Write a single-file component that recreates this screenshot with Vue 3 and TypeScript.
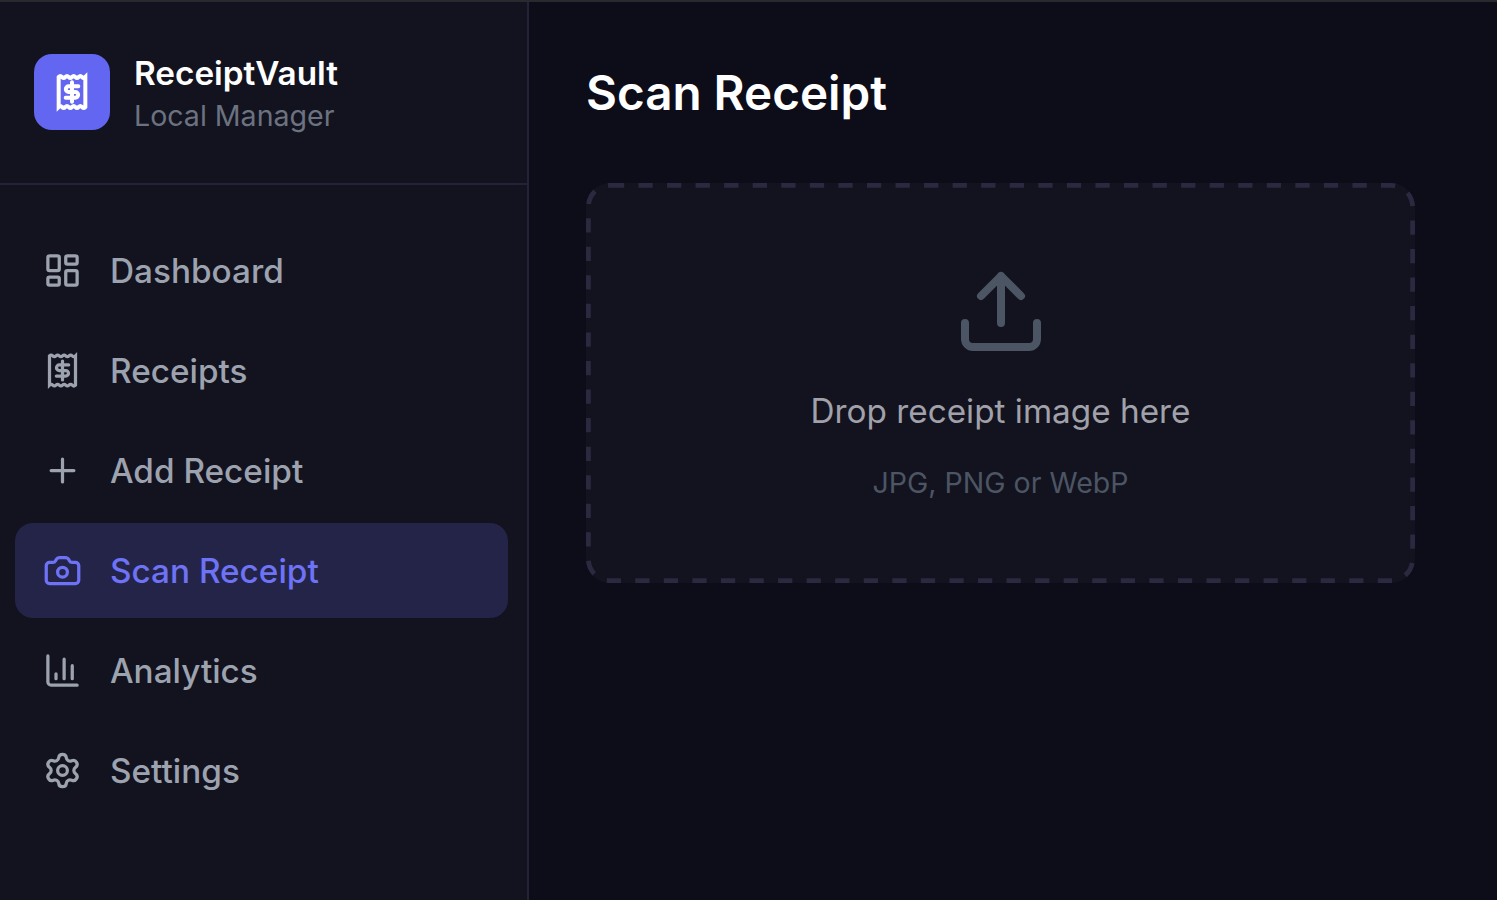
<script setup lang="ts">
interface NavItem { label: string; icon: string; active?: boolean }
const items: NavItem[] = [
  { label: 'Dashboard', icon: 'dash' },
  { label: 'Receipts', icon: 'receipt' },
  { label: 'Add Receipt', icon: 'plus' },
  { label: 'Scan Receipt', icon: 'camera', active: true },
  { label: 'Analytics', icon: 'chart' },
  { label: 'Settings', icon: 'gear' },
]
const receiptFrame = 'M4 3q1-1 2 0t2 0 2 0 2 0 2 0 2 0 2 0 2 0V21q-1 1-2 0t-2 0-2 0-2 0-2 0-2 0-2 0-2 0z'
const receiptDollar = 'M15.8 8.6H10a1.7 1.7 0 0 0 0 3.4h4a1.7 1.7 0 0 1 0 3.4H8.2M12 6.2v11.6'
</script>

<template>
  <div class="app">
    <aside class="sidebar">
      <header class="brand">
        <div class="logo">
          <svg class="logo-icon" viewBox="0 0 24 24" fill="none" stroke="currentColor" stroke-width="2.4" stroke-linecap="round" stroke-linejoin="miter">
            <path :d="receiptFrame" />
            <path :d="receiptDollar" />
          </svg>
        </div>
        <div class="brand-text">
          <div class="brand-name">ReceiptVault</div>
          <div class="brand-sub">Local Manager</div>
        </div>
      </header>
      <nav class="nav">
        <a v-for="item in items" :key="item.label" class="nav-item" :class="{ active: item.active }">
          <svg class="nav-icon" viewBox="0 0 24 24" fill="none" stroke="currentColor" stroke-width="2" stroke-linecap="round" stroke-linejoin="round">
            <template v-if="item.icon === 'dash'">
              <rect x="3" y="3" width="7" height="9" rx="1" />
              <rect x="14" y="3" width="7" height="5" rx="1" />
              <rect x="14" y="12" width="7" height="9" rx="1" />
              <rect x="3" y="16" width="7" height="5" rx="1" />
            </template>
            <template v-else-if="item.icon === 'receipt'">
              <path stroke-linejoin="miter" :d="receiptFrame" />
              <path :d="receiptDollar" />
            </template>
            <template v-else-if="item.icon === 'plus'">
              <path d="M5 12h14M12 5v14" />
            </template>
            <template v-else-if="item.icon === 'camera'">
              <path d="M13.997 4a2 2 0 0 1 1.76 1.05l.486.9A2 2 0 0 0 18.003 7H20a2 2 0 0 1 2 2v9a2 2 0 0 1-2 2H4a2 2 0 0 1-2-2V9a2 2 0 0 1 2-2h1.997a2 2 0 0 0 1.759-1.048l.489-.904A2 2 0 0 1 10.004 4z" />
              <circle cx="12" cy="13" r="3" />
            </template>
            <template v-else-if="item.icon === 'chart'">
              <path d="M3 3v16a2 2 0 0 0 2 2h16M18 17V9M13 17V5M8 17v-3" />
            </template>
            <template v-else>
              <path d="M9.671 4.136a2.34 2.34 0 0 1 4.659 0 2.34 2.34 0 0 0 3.319 1.915 2.34 2.34 0 0 1 2.33 4.033 2.34 2.34 0 0 0 0 3.831 2.34 2.34 0 0 1-2.33 4.033 2.34 2.34 0 0 0-3.319 1.915 2.34 2.34 0 0 1-4.659 0 2.34 2.34 0 0 0-3.32-1.915 2.34 2.34 0 0 1-2.33-4.033 2.34 2.34 0 0 0 0-3.831A2.34 2.34 0 0 1 6.35 6.051a2.34 2.34 0 0 0 3.319-1.915" />
              <circle cx="12" cy="12" r="3" />
            </template>
          </svg>
          <span>{{ item.label }}</span>
        </a>
      </nav>
    </aside>
    <main class="main">
      <h1 class="title">Scan Receipt</h1>
      <section class="drop">
        <svg class="dash-line" viewBox="0 0 829 400" fill="none">
          <rect x="2.4" y="2.4" width="824.2" height="395.2" rx="21.5" stroke="#2a2940" stroke-width="4.76" stroke-dasharray="14.28 14.28" />
        </svg>
        <svg class="upload" viewBox="0 0 80 80" fill="none" stroke="currentColor" stroke-width="8" stroke-linecap="round" stroke-linejoin="round">
          <path d="M4 52v16a8 8 0 0 0 8 8h56a8 8 0 0 0 8-8V52M40 52V5M20 25L40 5l20 20" />
        </svg>
        <p class="drop-main">Drop receipt image here</p>
        <p class="drop-sub">JPG, PNG or WebP</p>
      </section>
    </main>
  </div>
</template>

<style>
html, body { margin: 0; background: #0d0c19; }
</style>

<style scoped>
.app {
  display: flex;
  height: 900px;
  box-sizing: border-box;
  border-top: 2px solid #2a2a2e;
  font-family: Inter, "Liberation Sans", sans-serif;
  background: #0d0c19;
  overflow: hidden;
}
.sidebar {
  width: 529px;
  flex: none;
  box-sizing: border-box;
  background: #13121f;
  border-right: 2px solid #232238;
}
.brand {
  display: flex;
  align-items: center;
  gap: 24px;
  height: 183px;
  box-sizing: border-box;
  padding: 0 34px 2px;
  border-bottom: 2px solid #232238;
}
.logo {
  width: 76px;
  height: 76px;
  flex: none;
  border-radius: 18px;
  background: #6366f1;
  color: #fff;
  display: flex;
  align-items: center;
  justify-content: center;
}
.logo-icon { width: 40px; height: 40px; }
.brand-text { padding-top: 6px; }
.brand-name {
  font-size: 33.32px;
  font-weight: 600;
  line-height: 40px;
  color: #fff;
}
.brand-sub {
  font-size: 28.56px;
  line-height: 40px;
  color: #6b7280;
  margin-top: 3px;
}
.nav {
  display: flex;
  flex-direction: column;
  gap: 5px;
  padding: 38px 19px 0 15px;
}
.nav-item {
  display: flex;
  align-items: center;
  gap: 28px;
  height: 95px;
  padding: 0 28px;
  border-radius: 18px;
  color: #9ca3af;
  font-size: 33.32px;
  font-weight: 500;
}
.nav-item.active {
  background: #242449;
  color: #6e72f5;
}
.nav-icon { width: 39px; height: 39px; flex: none; }
.main {
  flex: 1;
  min-width: 0;
  padding: 0 82px 0 57px;
}
.title {
  margin: 0;
  padding-top: 61px;
  font-size: 47.6px;
  line-height: 60px;
  font-weight: 600;
  color: #fff;
}
.drop {
  position: relative;
  margin-top: 60px;
  height: 400px;
  box-sizing: border-box;
  border-radius: 24px;
  background: #13121f;
  display: flex;
  flex-direction: column;
  align-items: center;
  padding-top: 88px;
}
.dash-line {
  position: absolute;
  inset: 0;
  width: 100%;
  height: 100%;
}
.upload { width: 80px; height: 80px; color: #4b5563; }
.drop-main {
  margin: 38px 0 0;
  font-size: 33.32px;
  line-height: 44px;
  color: #a1a1aa;
}
.drop-sub {
  margin: 30px 0 0;
  font-size: 28.56px;
  line-height: 40px;
  color: #4b5563;
}
</style>
